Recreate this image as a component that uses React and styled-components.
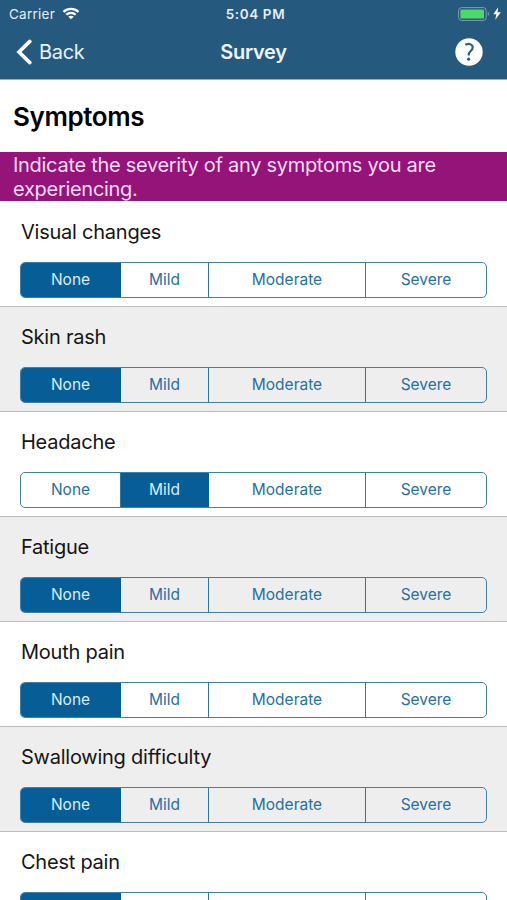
import React, { useState } from "react";
import styled, { createGlobalStyle } from "styled-components";

const GlobalStyle = createGlobalStyle`
  * { box-sizing: border-box; }
  html, body { margin: 0; height: 100%; overflow: hidden; }
  body { background: #fff; font-family: Inter, "Liberation Sans", sans-serif; color: #151515; }
  button { font-family: inherit; margin: 0; padding: 0; border: 0; background: none; }
`;

const Screen = styled.div`
  width: 100%;
  height: 100vh;
  overflow: hidden;
`;

const Header = styled.header`
  height: 80px;
  background: #25597e;
  border-bottom: 1px solid #92b0c4;
  color: #fff;
`;

const StatusBar = styled.div`
  display: grid;
  grid-template-columns: 1fr auto 1fr;
  align-items: center;
  height: 27px;
  padding: 0 6px 0 9px;
  font-size: 13.5px;
  line-height: 26px;
  color: #e4eef6;
`;

const Carrier = styled.div`
  display: flex;
  align-items: center;
  gap: 7px;
  letter-spacing: 0.25px;
`;

const Clock = styled.div`
  padding-left: 1px;
  font-weight: 600;
  letter-spacing: 0.6px;
`;

const Power = styled.div`
  display: flex;
  justify-content: flex-end;
  align-items: center;
  gap: 3px;
`;

const NavBar = styled.nav`
  display: grid;
  grid-template-columns: 1fr auto 1fr;
  align-items: center;
  height: 50px;
  padding: 0 24px 0 16px;
`;

const BackButton = styled.button`
  display: flex;
  align-items: center;
  gap: 7px;
  color: #e6f1fb;
  font-size: 20px;
  line-height: 50px;
  letter-spacing: -0.3px;
`;

const NavTitle = styled.div`
  padding-left: 8px;
  font-size: 20px;
  font-weight: 600;
  line-height: 50px;
  letter-spacing: -0.25px;
  color: #ecf5fd;
`;

const HelpButton = styled.button`
  justify-self: end;
  display: flex;
`;

const Heading = styled.h1`
  margin: 0;
  height: 72px;
  padding-left: 13px;
  font-size: 26px;
  font-weight: 600;
  line-height: 73px;
  letter-spacing: -0.4px;
  color: #000;
`;

const Banner = styled.p`
  margin: 0 0 1px;
  height: 49px;
  padding: 1px 60px 0 13px;
  background: #941479;
  color: #fbdcf5;
  font-size: 20px;
  line-height: 24px;
  letter-spacing: -0.29px;
`;

const Question = styled.section`
  height: 105px;
  padding: 15px 20px 0;
  border-bottom: 1px solid #bdbdbd;
  background: ${(p) => (p.$shaded ? "#eeeeee" : "#ffffff")};
`;

const Label = styled.h2`
  margin: 0 0 15px 1px;
  font-size: 20px;
  font-weight: 400;
  line-height: 30px;
  letter-spacing: -0.24px;
`;

const Segments = styled.div`
  display: grid;
  grid-template-columns: 100px 88px 157px 120px;
  width: 467px;
  height: 36px;
  border: 1px solid #3f81ac;
  border-radius: 5px;
  overflow: hidden;
`;

const Segment = styled.button`
  font-size: 15.5px;
  line-height: 34px;
  color: ${(p) => (p.$active ? "#d9edfb" : "#2671a4")};
  background: ${(p) => (p.$active ? "#075e96" : "transparent")};
  border-right: 1px solid ${(p) => (p.$active ? "#075e96" : "#2f76a5")};
  &:last-child { border-right: 0; }
`;

const options = ["None", "Mild", "Moderate", "Severe"];

const symptoms = [
  { name: "Visual changes", value: "None" },
  { name: "Skin rash", value: "None" },
  { name: "Headache", value: "Mild" },
  { name: "Fatigue", value: "None" },
  { name: "Mouth pain", value: "None" },
  { name: "Swallowing difficulty", value: "None" },
  { name: "Chest pain", value: "None" },
];

function WifiIcon() {
  return (
    <svg width="18" height="13" viewBox="0 0 17 13" fill="none" stroke="#fff" strokeWidth="2.3">
      <path d="M1 4.8C5.2 .8 11.8 .8 16 4.8" />
      <path d="M3.8 7.8C6.4 5.2 10.6 5.2 13.2 7.8" />
      <path d="M8.5 12.3L5.8 9.7Q8.5 7.6 11.2 9.7Z" fill="#fff" stroke="none" />
    </svg>
  );
}

function BatteryIcon() {
  return (
    <svg width="32" height="14" viewBox="0 0 32 14" fill="none">
      <rect x=".6" y=".6" width="27.6" height="12.8" rx="3" stroke="#7f9eb4" />
      <rect x="2.4" y="2.4" width="23.6" height="9.2" rx="1.2" fill="#4cd964" />
      <path d="M29.8 4.8Q32.4 7 29.8 9.2Z" fill="#7f9eb4" />
    </svg>
  );
}

function BoltIcon() {
  return (
    <svg width="8" height="13" viewBox="0 0 8 13" fill="#fff">
      <path d="M5.2 .3L.3 7.2H3.3L2.3 12.7L7.8 5.2H4.5Z" />
    </svg>
  );
}

function BackIcon() {
  return (
    <svg width="16" height="26" viewBox="0 0 16 26" fill="none" stroke="#fff" strokeWidth="3.6" strokeLinecap="round">
      <path d="M13.8 2.4L3 13L13.8 23.6" />
    </svg>
  );
}

function HelpIcon() {
  return (
    <svg width="28" height="28" viewBox="0 0 28 28" fill="none">
      <circle cx="14" cy="14" r="13.7" fill="#fff" />
      <path d="M10.3 6.9C13.6 5 17.7 6 17.7 9.4C17.7 12.8 13.6 12.9 13.6 17.4" stroke="#315f82" strokeWidth="2.1" />
      <circle cx="13.6" cy="21.2" r="1.6" fill="#315f82" />
    </svg>
  );
}

function SymptomQuestion({ symptom, shaded }) {
  const [value, setValue] = useState(symptom.value);
  return (
    <Question $shaded={shaded}>
      <Label>{symptom.name}</Label>
      <Segments>
        {options.map((option) => (
          <Segment key={option} $active={value === option} onClick={() => setValue(option)}>
            {option}
          </Segment>
        ))}
      </Segments>
    </Question>
  );
}

export default function App() {
  return (
    <Screen>
      <GlobalStyle />
      <Header>
        <StatusBar>
          <Carrier>Carrier<WifiIcon /></Carrier>
          <Clock>5:04 PM</Clock>
          <Power><BatteryIcon /><BoltIcon /></Power>
        </StatusBar>
        <NavBar>
          <BackButton><BackIcon />Back</BackButton>
          <NavTitle>Survey</NavTitle>
          <HelpButton aria-label="Help"><HelpIcon /></HelpButton>
        </NavBar>
      </Header>
      <Heading>Symptoms</Heading>
      <Banner>Indicate the severity of any symptoms you are experiencing.</Banner>
      {symptoms.map((symptom, i) => (
        <SymptomQuestion key={symptom.name} symptom={symptom} shaded={i % 2 === 1} />
      ))}
    </Screen>
  );
}
